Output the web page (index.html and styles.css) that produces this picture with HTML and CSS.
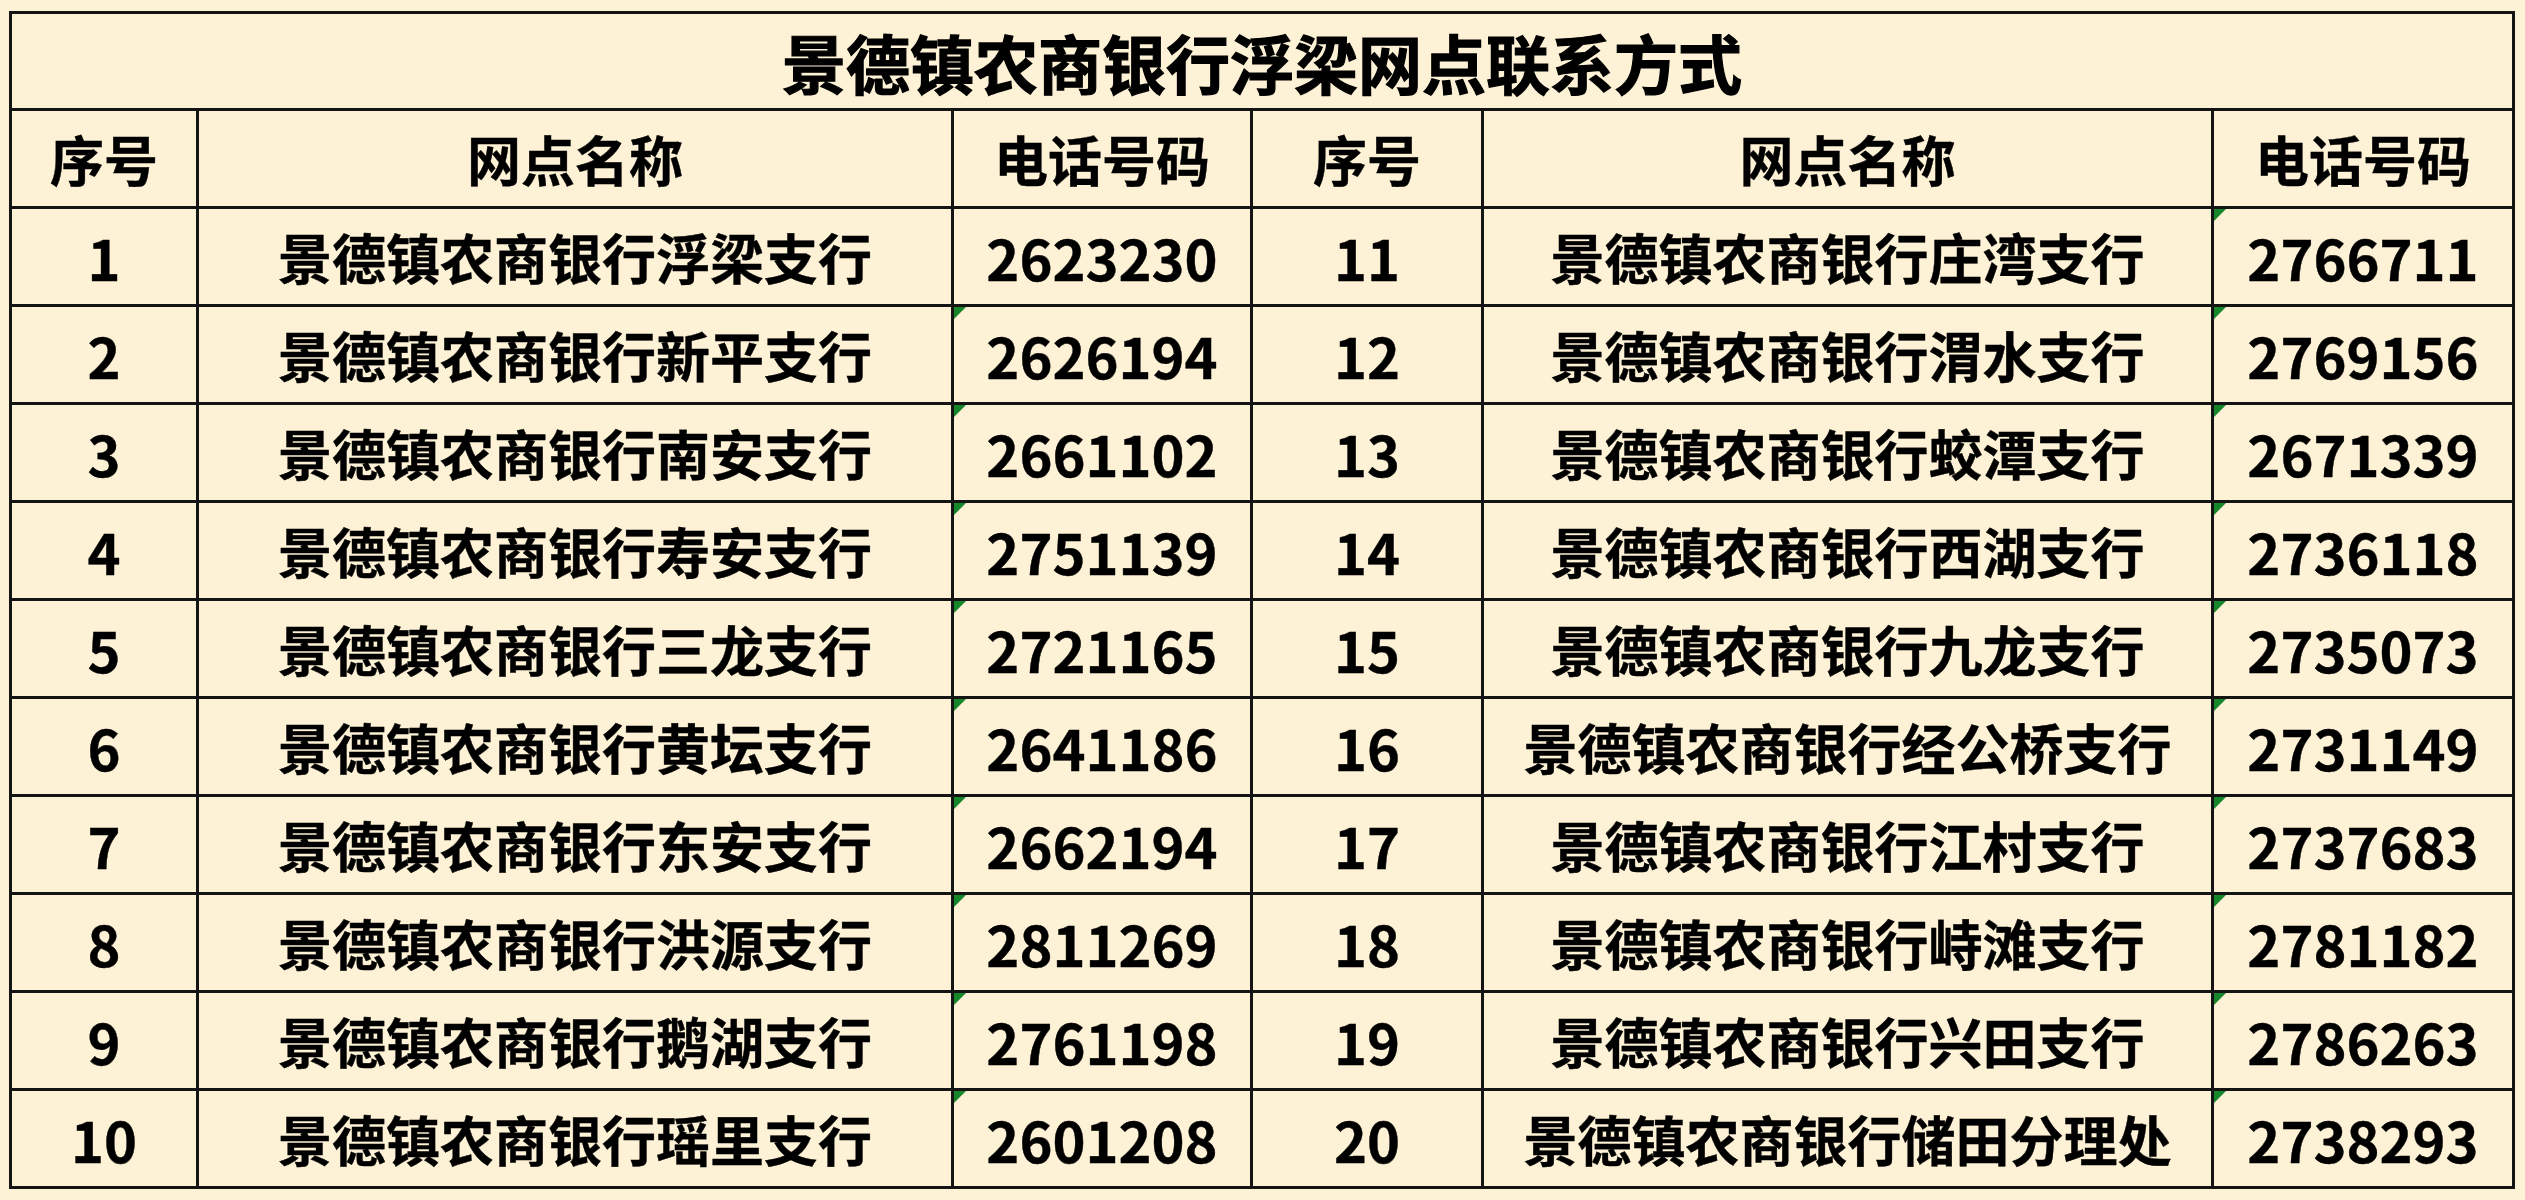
FILE: index.html
```html
<!DOCTYPE html>
<html lang="zh-CN">
<head>
<meta charset="utf-8">
<title>景德镇农商银行浮梁网点联系方式</title>
<link rel="stylesheet" href="styles.css">
</head>
<body>
<table class="sheet">
  <colgroup>
    <col class="c-no">
    <col class="c-name">
    <col class="c-tel">
    <col class="c-no2">
    <col class="c-name2">
    <col class="c-tel2">
  </colgroup>
  <tr class="title-row"><td colspan="6" class="title">景德镇农商银行浮梁网点联系方式</td></tr>
  <tr class="head-row">
    <td>序号</td><td>网点名称</td><td>电话号码</td>
    <td>序号</td><td>网点名称</td><td>电话号码</td>
  </tr>
  <tr><td class="num">1</td><td>景德镇农商银行浮梁支行</td><td class="num">2623230</td><td class="num">11</td><td>景德镇农商银行庄湾支行</td><td class="num flag">2766711</td></tr>
  <tr><td class="num">2</td><td>景德镇农商银行新平支行</td><td class="num flag">2626194</td><td class="num">12</td><td>景德镇农商银行渭水支行</td><td class="num flag">2769156</td></tr>
  <tr><td class="num">3</td><td>景德镇农商银行南安支行</td><td class="num flag">2661102</td><td class="num">13</td><td>景德镇农商银行蛟潭支行</td><td class="num flag">2671339</td></tr>
  <tr><td class="num">4</td><td>景德镇农商银行寿安支行</td><td class="num flag">2751139</td><td class="num">14</td><td>景德镇农商银行西湖支行</td><td class="num flag">2736118</td></tr>
  <tr><td class="num">5</td><td>景德镇农商银行三龙支行</td><td class="num flag">2721165</td><td class="num">15</td><td>景德镇农商银行九龙支行</td><td class="num flag">2735073</td></tr>
  <tr><td class="num">6</td><td>景德镇农商银行黄坛支行</td><td class="num flag">2641186</td><td class="num">16</td><td>景德镇农商银行经公桥支行</td><td class="num flag">2731149</td></tr>
  <tr><td class="num">7</td><td>景德镇农商银行东安支行</td><td class="num flag">2662194</td><td class="num">17</td><td>景德镇农商银行江村支行</td><td class="num flag">2737683</td></tr>
  <tr><td class="num">8</td><td>景德镇农商银行洪源支行</td><td class="num flag">2811269</td><td class="num">18</td><td>景德镇农商银行峙滩支行</td><td class="num flag">2781182</td></tr>
  <tr><td class="num">9</td><td>景德镇农商银行鹅湖支行</td><td class="num flag">2761198</td><td class="num">19</td><td>景德镇农商银行兴田支行</td><td class="num flag">2786263</td></tr>
  <tr><td class="num">10</td><td>景德镇农商银行瑶里支行</td><td class="num flag">2601208</td><td class="num">20</td><td>景德镇农商银行储田分理处</td><td class="num flag">2738293</td></tr>
</table>
</body>
</html>
```

FILE: styles.css
```css
html, body {
  margin: 0;
  padding: 0;
  background: #fdf1d6;
}
body {
  padding: 11px 0 0 9px;
  font-family: "Noto Sans CJK SC", "Noto Sans", sans-serif;
  font-weight: 700;
  color: #000;
}
.sheet {
  border-collapse: collapse;
  table-layout: fixed;
  width: 2506px;
  background: #fdf1d6;
}
.c-no { width: 187px; }
.c-name { width: 755px; }
.c-tel { width: 299px; }
.c-no2 { width: 231px; }
.c-name2 { width: 730px; }
.c-tel2 { width: 301px; }
.sheet td {
  border: 3px solid #141414;
  text-align: center;
  vertical-align: middle;
  padding: 0;
  height: 95px;
  font-size: 54px;
  line-height: 1;
  white-space: nowrap;
  position: relative;
  -webkit-text-stroke: 0.4px #000;
}
.sheet .title-row td {
  height: 94px;
  font-size: 64px;
  -webkit-text-stroke: 1.2px #000;
}
.sheet td.num {
  font-size: 56px;
}
.sheet td.flag::before {
  content: "";
  position: absolute;
  left: 0;
  top: 0;
  width: 0;
  height: 0;
  border-top: 12px solid #15862a;
  border-right: 12px solid transparent;
}
```
